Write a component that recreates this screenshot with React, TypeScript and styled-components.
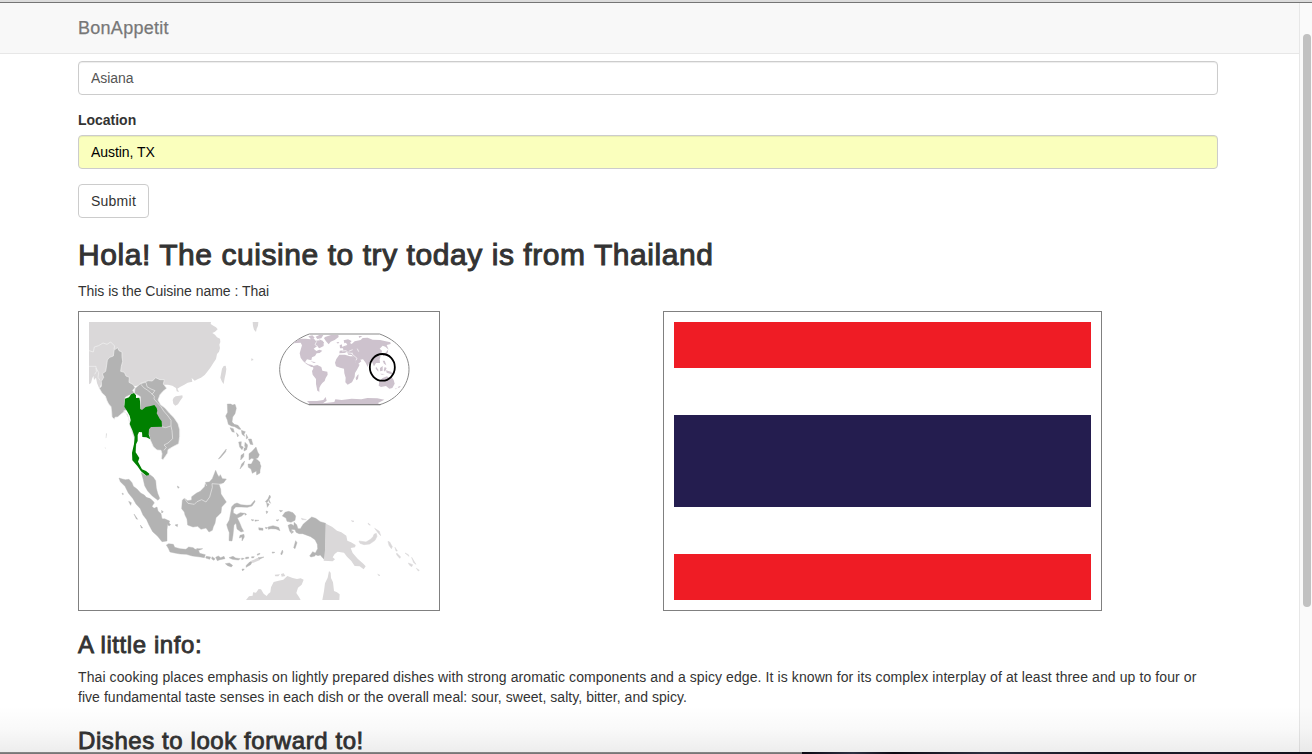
import React from "react";
import styled, { createGlobalStyle } from "styled-components";

const GlobalStyle = createGlobalStyle`
  * { box-sizing: border-box; }
  body {
    margin: 0;
    overflow: hidden;
    font: 14px/20px "Liberation Sans", Arial, sans-serif;
    color: #333;
    background: #fff;
  }
`;

const Window = styled.div`
  display: flex;
  flex-direction: column;
  width: 1312px;
  height: 754px;
  overflow: hidden;
`;

const TopEdge = styled.div`
  flex: none;
  height: 3px;
  background: #dcdcdc;
  border-bottom: 1px solid #757575;
`;

const Viewport = styled.div`
  flex: 1;
  display: flex;
  min-height: 0;
  position: relative;
`;

const Page = styled.div`
  flex: 1;
  min-width: 0;
  overflow: hidden;
`;

const Navbar = styled.nav`
  height: 51px;
  padding: 15px 78px;
  background: #f8f8f8;
  border-bottom: 1px solid #e7e7e7;
`;

const Brand = styled.span`
  display: block;
  font-size: 18px;
  line-height: 20px;
  letter-spacing: 0.28px;
  color: #777;
  -webkit-text-stroke: 0.25px #777;
`;

const Container = styled.main`
  width: 1170px;
  margin-left: 63px;
  padding: 7px 15px 0;
`;

const FormGroup = styled.div`
  margin-bottom: 15px;
`;

const Label = styled.label`
  display: block;
  margin-bottom: 5px;
  font-weight: 700;
  letter-spacing: -0.02px;
`;

const Input = styled.input<{ $autofilled?: boolean }>`
  display: block;
  width: 100%;
  height: 34px;
  padding: 6px 12px;
  font: inherit;
  letter-spacing: -0.06px;
  color: ${(p) => (p.$autofilled ? "#000" : "#555")};
  background: ${(p) => (p.$autofilled ? "#faffbd" : "#fff")};
  border: 1px solid #ccc;
  border-radius: 4px;
  box-shadow: inset 0 1px 1px rgba(0, 0, 0, 0.075);
`;

const Button = styled.button`
  display: block;
  width: 71px;
  height: 34px;
  padding: 0;
  font: inherit;
  letter-spacing: 0.25px;
  color: #333;
  background: #fff;
  border: 1px solid #ccc;
  border-radius: 4px;
`;

const Heading = styled.h2`
  width: max-content;
  margin: 20px 0 10px;
  font-size: 30px;
  font-weight: 400;
  line-height: 33px;
  letter-spacing: 0.56px;
  -webkit-text-stroke: 1px #333;
`;

const SubHeading = styled.h3`
  margin: 21px 0 9px;
  font-size: 24px;
  font-weight: 400;
  line-height: 26.4px;
  letter-spacing: 0.58px;
  -webkit-text-stroke: 0.85px #333;
`;

const Paragraph = styled.p`
  margin: 0 0 10px;
`;

const Line = styled.span<{ $spacing: number }>`
  display: block;
  white-space: nowrap;
  letter-spacing: ${(p) => p.$spacing}px;
`;

const Row = styled.div`
  display: grid;
  grid-template-columns: 585px 555px;
`;

const Frame = styled.div<{ $width: number }>`
  width: ${(p) => p.$width}px;
  height: 300px;
  padding: 10px;
  border: 1px solid #808080;
`;

const Flag = styled.div`
  display: grid;
  grid-template-rows: 1fr 1fr 2fr 1fr 1fr;
  height: 100%;
`;

const Stripe = styled.div<{ $color: string }>`
  background: ${(p) => p.$color};
`;

const ScrollTrack = styled.div`
  flex: none;
  width: 13px;
  padding: 31px 0 0 4px;
  background: #fafafa;
  border-left: 1px solid #e7e7e7;
`;

const ScrollThumb = styled.div`
  width: 8px;
  height: 573px;
  margin-left: -1px;
  border-radius: 4px;
  background: #c1c1c1;
`;

const BottomFade = styled.div`
  position: absolute;
  left: 0;
  right: 0;
  bottom: 0;
  height: 46px;
  background: linear-gradient(rgba(0, 0, 0, 0), rgba(0, 0, 0, 0.025) 50%, rgba(0, 0, 0, 0.07));
`;

const BottomEdge = styled.div`
  flex: none;
  display: flex;
  height: 2px;
`;

const EdgeLight = styled.div`
  width: 802px;
  background: linear-gradient(#8b8b8b, #707070);
`;

const EdgeDark = styled.div`
  flex: 1;
  background: linear-gradient(90deg, #0c0812, #2d3042 10%, #0d0912 18%, #2d3040 36%, #151520 60%, #1c1c2a 80%, #10101a);
`;

const LAND = "#dad8d9";
const REGION = "#b3b3b3";
const WORLD = "#cdc2cd";

function LocatorMap() {
  return (
    <svg width="340" height="278" viewBox="33 36 1020 834" role="img" aria-label="Thailand in Southeast Asia">
      {/* mainland Asia */}
      <g strokeLinejoin="round">
        <path fill={LAND} d="M33 36H399L398 42 406 47 414 52 419 58 411 65 403 69 411 74 417 82 426 86 427 96 424 104 426 114 423 125 417 132 414 147 406 159 398 172 389 184 380 195 369 203 360 207 350 212 341 204 343 215 329 218 319 224 306 231 298 236 303 246 296 244 294 234 283 227 270 224 258 224 263 235 243 250 190 225 160 230 130 190 90 170 64 236 57 219 54 203 48 210 46 197 42 207 39 219 33 223Z" />
        <path fill={LAND} d="M432 176 437 168 443 167 445 177 443 191 440 204 437 222 432 215 427 203Z M287 263 293 259 304 257 313 256 314 262 306 273 300 283 292 287 286 281 284 270Z M524 36H541L540 47 536 56 534 66 528 59 525 48Z M521 144l6 6-8 2Z" />
        <g fill="none" stroke="#f3f3f3" strokeWidth="2">
          <path d="M33 122 46 126 49 111 62 107 75 99 87 103 98 96 110 108 108 118M33 169H54L55 185 50 193M54 174 62 188 60 202 66 211" />
        </g>
        <path fill={REGION} stroke="#f1f1f1" strokeWidth="2" d="M112 117 119 113 123 122 132 126 132 140 134 154 130 169 128 184 139 187 144 198 154 202 153 217 166 224 171 233 164 241 169 249 162 252 142 262 139 284 147 299 137 303 149 313 155 336 160 357 170 379 176 402 170 427 174 398 164 371 156 348 151 323 144 309 138 305 126 315 119 321 111 322 109 328 102 321 101 306 99 290 92 282 87 272 82 258 72 249 64 235 70 229 70 214 77 202 73 191 83 184 86 165 88 150 95 142 106 138 108 122Z" />
        <path fill={REGION} stroke="#f1f1f1" strokeWidth="2" d="M187 221 199 216 211 212 223 213 233 203 246 209 259 209 256 222 266 235 255 244 246 254 240 270 248 284 261 294 274 309 288 323 300 341 305 359 305 379 302 401 283 411 270 419 269 429 255 449 250 446 252 431 249 421 237 420 226 410 217 390 213 374 193 362 187 299 187 260 169 250 171 235Z" />
        <g fill="none" stroke="#ededed" strokeWidth="2">
          <path d="M187 221 197 233 208 240 218 248 229 259 228 267 238 278 248 289 257 303 270 318 279 331 279 348 282 362 284 386 270 399 258 405 265 412 258 421M188 220 204 217 207 230 219 237 231 242 222 253M251 350 263 353 278 348" />
        </g>
        <path fill="#008000" d="M141 266 153 262 159 253 168 249 174 256 174 264 184 263 186 273 187 297 192 300 203 291 218 288 229 285 236 294 238 302 236 310 245 326 251 334 252 350 219 351 213 358 212 373 217 388 205 382 193 381 192 367 183 366 179 375 179 393 174 403 173 427 184 444 180 455 192 478 204 483 214 491 212 500 205 497 189 484 178 468 163 451 162 428 168 402 170 381 163 361 155 342 158 331 155 317 147 303 139 290Z" />
      </g>

      {/* Malay peninsula, Sumatra and Java */}
      <g fill={REGION} stroke={REGION} strokeWidth="1.2" transform="translate(0 450)">
        <path d="M190 38 205 48 216 44 226 52 233 62 235 84 239 100 245 115 240 121 223 108 209 93 200 77 196 59Z" />
        <path d="M123 54 133 57 142 59 153 58 162 68 166 79 177 87 188 99 199 105 207 115 218 117 229 128 222 139 228 145 237 141 240 153 249 161 252 176 260 177 269 191 267 209 267 243 252 245 239 229 224 215 213 195 206 179 195 165 187 146 174 132 165 116 151 99 141 79 127 65Z" />
        <path d="M152 124 160 128 158 136ZM168 162l5 7 6 9-4-1ZM187 195l7 9-4 0ZM251 151l5 5-5 3ZM259 176l9 4 7 3-2 6 5 5-5 4-7-8ZM291 195l8-2-1 7ZM298 78l6 4-4 3ZM132 99l5 3-3 2ZM198 110l16 5 12 10-5 5-15-8Z" />
        <path d="M265 255 272 251 286 253 290 262 306 266 324 268 332 261 346 263 351 268 360 267 365 280 382 284 379 293 367 291 343 288 325 283 307 282 290 279 276 276 271 265ZM356 266l18 0-11 5ZM385 289l13 2-3 7-12-4ZM402 290l9 6-3 5-7-4ZM413 292l8-4 7 5 10-4 3 7-15 3-8 3ZM453 293l12-4 8 5 14 2-6 4-18-2ZM491 294l8 2-8 3ZM503 292l9-1 0 4-9 2ZM521 290l8 0-2 3-6 1ZM538 282l8-2-1 3-7 3ZM442 311l12-2 10 7-4 5-11-4ZM505 316l10-10 9-3-6 11-14 8ZM492 327l7 0-5 6Z" />
        <path fill={LAND} stroke="none" d="M517 304 538 294 546 294 546 300 524 309Z" />
      </g>

      {/* Borneo and Sulawesi */}
      <g fill={REGION} stroke={REGION} strokeWidth="1.2" transform="translate(0 450)">
        <path d="M313 121 319 115 329 122 341 120 341 110 356 99 367 94 380 80 383 67 394 66 403 56 413 31 418 43 423 51 427 44 433 56 445 57 437 68 423 73 428 88 429 102 437 114 445 126 431 141 429 158 423 164 414 173 411 190 406 200 403 211 393 216 384 204 369 208 359 199 345 201 329 195 327 177 321 165 319 156 311 146Z" />
        <path fill="none" stroke="#ededed" strokeWidth="2" d="M319 115 330 130 349 133 357 125 371 119 384 126 395 111 403 82 402 71 430 73M382 69l4 9" />
        <path d="M459 153 461 140 469 132 477 129 489 134 507 136 518 135 530 121 531 125 522 138 508 142 489 141 473 141 466 149 466 159 476 164 487 158 500 160 491 168 478 174 485 188 491 203 497 214 489 216 477 207 474 190 468 195 465 225 462 243 453 242 454 218 449 205 446 194 454 180ZM486 226l12-3 1 8-7 12 0-12-8 3ZM500 159l6 4-5 3ZM519 179l8 0-2 4ZM531 180l12 1-12 3Z" />
        <path d="M486 27 491 12 500 3 497 14ZM510 12 520 12 529-5 539 0 546 7V39L536 45 535 33 523 40 519 27 511 22Z" />
      </g>

      {/* Philippines */}
      <g fill={REGION} stroke={REGION} strokeWidth="1.2">
        <path d="M448 282 458 282 464 285 471 283 475 295 471 311 464 321 462 336 469 343 480 346 489 358 483 358 470 350 460 348 451 343 448 330 443 318 449 307ZM456 353l10 3 3 11-7-2ZM490 361l12 4-4 8 2 6-8-6ZM475 368l7 8-3 5ZM505 373l5 10-5 4ZM482 396l8-1-1 12 7 4-4 8-7-8ZM501 397l8 8-3 9-6-5ZM511 387l9 0 5 17-8-1ZM498 415l10-6-2 10-8 4ZM445 417l-2 8-16 19-6 3 19-24ZM513 431l8-6 13-14 5 15 5 8-4 9-10 5-9-3-8 5ZM489 436l9-6-1 10-9 10Z" />
        <path fill="#dedede" stroke="none" d="M84 368l3 4-2 12-2 1ZM80 412l3 1-1 5Z" />
        <path d="M531 449 541 454 549 468 545 482 538 474 526 470Z" />
      </g>

      {/* New Guinea, Moluccas and northern Australia */}
      <g transform="translate(540 450)">
        <path fill={REGION} stroke={REGION} strokeWidth="1.2" d="M73 168 81 157 92 154 105 158 113 168 111 181 99 187 87 184 84 174ZM90 196l9-4 9 5 0-10 8 7 4 12 7 0 9-14 17-14 8-7 12 4 14 10 16 5-2 109-6-4-8-10-7 2-10-4 9-17-1-13-7-14-13-9-24-9-11 0-9-4-3-8-10-1 0 13-6-8ZM155 288l9-13 9 5-2 8-12 3ZM64 151l10 1-6 4ZM54 180l9-1-5 4ZM22 125l8-9 5-11 3 6-6 10-5 7ZM26 129l8 3-6 10ZM33 120l5 10-5-4ZM24 153l6 2-4 6ZM2 203l13 2 0 6-12-1ZM30 201l15-4 17 5 4 10-12-5-15-1-8 2ZM22 202l7 1-5 4ZM113 242l4 6-6 18-4-3ZM68 282l5-12 2 6-4 9ZM42 276l9 1-7 3ZM0 293l18-2-12 6ZM103 212l4 4-5 3Z" />
        <path fill={LAND} d="M204 191 222 200 237 212 250 217 265 227 268 242 279 247 293 255 291 262 278 264 284 279 299 296 316 311 323 319 317 328 305 319 290 318 280 303 267 290 258 278 239 275 230 282 224 292 231 298 224 304 197 302 201 270Z" />
        <path fill={LAND} stroke={LAND} strokeWidth="1.6" d="M303 243 324 246 339 237 345 230 348 223 355 220 357 229 351 241 335 252 318 254 306 250ZM350 205l14 9 4 13-8-9ZM390 244l5 2 8 14-3 6-7-10ZM411 262l7 11-4 0ZM416 279l12 12-3 4-9-11ZM441 279l10 5 2 5ZM451 309l13 5-3 6-6-4ZM461 292l9 15 4 6-7-5ZM475 325l9 6-3 2ZM280 182l8 1-3 3ZM359 343l7 3-3 1ZM330 189l7 6-4 0ZM130 175l15 4-13 0Z" />
        <path fill={LAND} d="M-36 420 -27 409 -16 407 -15 397 -6 398 2 387 9 388 17 401 26 408 31 401 37 397 39 382 47 366 62 362 76 359 88 348 104 354 117 357 128 355 137 359 131 374 120 383 115 399 123 411 128 420ZM193 420 198 393 201 370 209 353 213 333 218 338 219 354 225 367 228 393 237 397 245 403 244 420Z" />
        <path fill={LAND} d="M50 344l16-1-5 6-9 0ZM69 342l8-2 5 8-11 2Z" />
      </g>

      {/* world inset */}
      <g transform="translate(540 0)">
        <path fill="#fff" stroke="#898989" strokeWidth="3" d="M154 72H365C418 91 453 132 453 178S418 269 365 284H154C101 267 65 224 65 178S101 91 154 72Z" />
        <g fill={WORLD}>
          <path d="M105 100 125 86 143 86 157 88 166 84 173 92 185 91 197 97 197 108 184 115 177 109 167 116 175 123 184 119 193 122 185 129 176 130 171 138 162 142 160 151 147 148 141 157 151 163 162 165 172 172 160 171 145 162 135 153 128 143 125 130 128 119 132 106 128 98Z" />
          <path d="M151 79l12-3 7 7-11 5ZM173 80l11-5 12 0-6 10-12 2ZM201 81l18-6 22 0 1 6-12 9-12 5-6 8-8-9-6-9ZM183 88l11 4 5 8-11-5ZM235 97l9-1-4 5ZM157 154l17 3-6 2Z" />
          <path d="M165 168 178 165 190 171 193 182 208 185 209 194 203 204 200 213 193 219 188 226 184 234 184 246 190 249 178 242 174 222 174 207 164 194 162 183 166 176Z" />
          <path d="M244 134 261 134 276 139 286 139 293 157 305 164 297 179 291 189 290 201 282 217 269 224 262 217 263 203 259 190 258 176 246 173 234 169 231 158 235 147ZM298 196l4-3-2 14-5 4-2-7Z" />
          <path d="M244 130 245 122 256 121 255 115 249 114 258 108 268 105 264 98 259 100 257 91 270 88 281 93 276 99 281 102 290 94 308 90 314 84 329 83 344 89 366 90 397 97 398 102 386 105 392 119 382 110 374 107 365 116 372 122 370 132 359 137 368 139 365 148 366 159 354 159 348 169 341 154 333 160 329 171 323 158 315 148 307 149 310 154 298 164 290 153 285 139 281 135 271 134 267 126 259 129ZM245 106l6-3 3 10-8 2ZM302 78l11 0-9 6Z" />
          <path d="M374 134l8-5 8-10 0 7-5 9-10 4ZM374 152l6 0 5 14-7-5ZM354 170l7 9 0 6-8-9ZM366 174l8-6 0 14-8 2ZM380 171l6 3-5 11-4-4ZM366 191l15 1-9 2ZM384 181l15 4 9 10-10-3-12-4ZM364 213l10-9 13-5 9 7 3-8 8 12 3 11-7 13-9 2-10-8-15 3-7-4ZM419 231l10-4-6 7ZM411 236l8-2-7 4Z" />
          <path d="M153 279 147 273 177 273 196 270 203 261 206 272 195 280 229 276 232 268 251 270 281 266 310 268 328 264 358 265 379 269 360 279 365 284H154Z" />
        </g>
        <g fill="none" stroke="#fff" strokeWidth="2">
          <path d="M252 123 264 122 272 129 285 130M280 130 297 145 294 151M284 119l-12 5M298 116l4 9M249 98l13 9M176 94l-5 10 9 6" />
        </g>
        <path stroke="#777" strokeWidth="3" d="M152 284H368" />
        <ellipse cx="373" cy="172" rx="37.5" ry="40" fill="none" stroke="#000" strokeWidth="5.4" />
      </g>
    </svg>
  );
}

const STRIPES = ["#ef1c25", "#fff", "#241d4f", "#fff", "#ef1c25"];

export default function App() {
  return (
    <Window>
      <GlobalStyle />
      <TopEdge />
      <Viewport>
        <Page>
          <Navbar>
            <Brand>BonAppetit</Brand>
          </Navbar>
          <Container>
            <FormGroup>
              <Input aria-label="Name" defaultValue="Asiana" />
            </FormGroup>
            <FormGroup>
              <Label htmlFor="location">Location</Label>
              <Input id="location" $autofilled defaultValue="Austin, TX" />
            </FormGroup>
            <Button type="button">Submit</Button>
            <Heading>Hola! The cuisine to try today is from Thailand</Heading>
            <Paragraph>
              <Line $spacing={-0.03}>This is the Cuisine name : Thai</Line>
            </Paragraph>
            <Row>
              <Frame $width={362}>
                <LocatorMap />
              </Frame>
              <Frame $width={439}>
                <Flag>
                  {STRIPES.map((color, i) => (
                    <Stripe key={i} $color={color} />
                  ))}
                </Flag>
              </Frame>
            </Row>
            <SubHeading>A little info:</SubHeading>
            <Paragraph>
              <Line $spacing={0.092}>
                Thai cooking places emphasis on lightly prepared dishes with strong aromatic components and a spicy edge. It is
                known for its complex interplay of at least three and up to four or
              </Line>
              <Line $spacing={0.04}>
                five fundamental taste senses in each dish or the overall meal: sour, sweet, salty, bitter, and spicy.
              </Line>
            </Paragraph>
            <SubHeading>Dishes to look forward to!</SubHeading>
          </Container>
        </Page>
        <ScrollTrack>
          <ScrollThumb />
        </ScrollTrack>
        <BottomFade />
      </Viewport>
      <BottomEdge>
        <EdgeLight />
        <EdgeDark />
      </BottomEdge>
    </Window>
  );
}
